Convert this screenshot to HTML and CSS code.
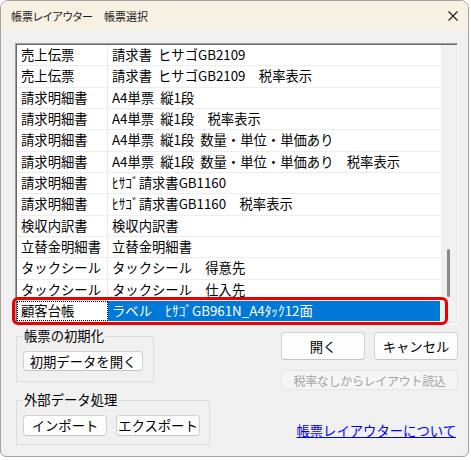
FILE: index.html
```html
<!DOCTYPE html>
<html lang="ja">
<head>
<meta charset="utf-8">
<title>帳票レイアウター 帳票選択</title>
<link rel="stylesheet" href="styles.css">
</head>
<body>
<div class="window">
  <div class="titlebar">
    <span class="title">帳票レイアウター　帳票選択</span>
    <svg class="close" width="10" height="10" viewBox="0 0 10 10"><path d="M0.5 0.5 L9.5 9.5 M9.5 0.5 L0.5 9.5" stroke="#1c1c1c" stroke-width="1.1" fill="none"/></svg>
  </div>

  <div class="list">
    <div class="rows">
      <div class="row"><span class="c1">売上伝票</span><span class="c2">請求書 ヒサゴGB2109</span></div>
      <div class="row"><span class="c1">売上伝票</span><span class="c2">請求書 ヒサゴGB2109　税率表示</span></div>
      <div class="row"><span class="c1">請求明細書</span><span class="c2">A4単票 縦1段</span></div>
      <div class="row"><span class="c1">請求明細書</span><span class="c2">A4単票 縦1段　税率表示</span></div>
      <div class="row"><span class="c1">請求明細書</span><span class="c2">A4単票 縦1段 数量・単位・単価あり</span></div>
      <div class="row"><span class="c1">請求明細書</span><span class="c2">A4単票 縦1段 数量・単位・単価あり　税率表示</span></div>
      <div class="row"><span class="c1">請求明細書</span><span class="c2">ﾋｻｺﾞ請求書GB1160</span></div>
      <div class="row"><span class="c1">請求明細書</span><span class="c2">ﾋｻｺﾞ請求書GB1160　税率表示</span></div>
      <div class="row"><span class="c1">検収内訳書</span><span class="c2">検収内訳書</span></div>
      <div class="row"><span class="c1">立替金明細書</span><span class="c2">立替金明細書</span></div>
      <div class="row"><span class="c1">タックシール</span><span class="c2">タックシール　得意先</span></div>
      <div class="row"><span class="c1">タックシール</span><span class="c2">タックシール　仕入先</span></div>
      <div class="row sel"><span class="c1">顧客台帳</span><span class="c2">ラベル　ﾋｻｺﾞGB961N_A4ﾀｯｸ12面</span></div>
    </div>
    <div class="scrollbar"><div class="thumb"></div></div>
    <div class="highlight"></div>
  </div>

  <div class="bottom">
    <div class="left">
      <fieldset class="group g1">
        <legend>帳票の初期化</legend>
        <button class="btn btn-init">初期データを開く</button>
      </fieldset>
      <fieldset class="group g2">
        <legend>外部データ処理</legend>
        <div class="btn-row">
          <button class="btn btn-io">インポート</button>
          <button class="btn btn-io">エクスポート</button>
        </div>
      </fieldset>
    </div>
    <div class="right">
      <div class="btn-row">
        <button class="btn btn-lg">開く</button>
        <button class="btn btn-lg">キャンセル</button>
      </div>
      <button class="btn btn-disabled" disabled>税率なしからレイアウト読込</button>
      <a class="link" href="#">帳票レイアウターについて</a>
    </div>
  </div>
</div>
</body>
</html>
```

FILE: styles.css
```css
* { box-sizing: border-box; }

html, body {
  margin: 0;
  padding: 0;
  background: #ffffff;
}

body {
  font-family: "Noto Sans CJK JP", "Noto Sans", sans-serif;
  font-size: 13.33px;
  color: #000;
}

.window {
  width: 469px;
  height: 457px;
  border: 1px solid #a3a3a3;
  border-radius: 8px 8px 6px 6px;
  background: #f0f0f0;
  overflow: hidden;
  display: flex;
  flex-direction: column;
}

.titlebar {
  flex: none;
  height: 29px;
  background: #f7f1e3;
  display: flex;
  align-items: center;
  justify-content: space-between;
  padding: 0 10px 0 10px;
  font-size: 11px;
  font-feature-settings: "palt";
  color: #1c1c1c;
}

.close { display: block; }

/* list box */
.list {
  position: relative;
  flex: none;
  display: flex;
  width: 443px;
  height: 281px;
  margin: 13px 10px 0 14px;
  padding: 1px;
  border: 1px solid;
  border-color: #a0a0a0 #ffffff #ffffff #a0a0a0;
  box-shadow: inset 1px 1px 0 #696969, inset -1px -1px 0 #e3e3e3;
  background: #ffffff;
}

.rows {
  flex: 1;
  overflow: hidden;
  display: flex;
  flex-direction: column;
  background: #ffffff;
}

.row {
  flex: none;
  height: 21.33px;
  display: grid;
  grid-template-columns: 91px 1fr;
  border-bottom: 1px solid #eeeeee;
  line-height: 20px;
  white-space: nowrap;
  word-spacing: 3px;
}

.c1, .c2 {
  overflow: hidden;
  padding-left: 4px;
}

.c1 { border-right: 1px solid #eaeaea; }

.row.sel .c1 {
  outline: 1px dotted #000;
  outline-offset: -1px;
}

.row.sel .c2 {
  background: #0078d7;
  color: #ffffff;
}

.scrollbar {
  flex: none;
  width: 16px;
  border-left: 1px solid #fbfbfb;
  background: #f0f0f0;
  padding: 204px 0 0 6px;
}

.thumb {
  width: 3px;
  height: 48px;
  background: #8a8a8a;
  border-radius: 2px;
}

.highlight {
  position: absolute;
  left: -4px;
  top: 253px;
  width: 436px;
  height: 28px;
  border: 3px solid #ea0000;
  border-radius: 6px;
}

/* bottom area */
.bottom {
  display: flex;
  justify-content: space-between;
  align-items: flex-start;
  padding: 0 10px 0 15px;
}

.left {
  margin-top: 4px;
  display: flex;
  flex-direction: column;
  align-items: flex-start;
  gap: 10px;
}

.group {
  margin: 0;
  min-width: 0;
  border: 1px solid #dcdcdc;
}

.group legend {
  padding: 0 1px;
  margin: 0;
  line-height: 16px;
  font-size: 13.33px;
}

.g1 {
  width: 138px;
  padding: 7px 9px 10px 6px;
}

.g2 {
  width: 194px;
  padding: 7px 9px 8px 6px;
}

.btn-row {
  display: flex;
  gap: 9px;
}

.btn {
  font: inherit;
  color: #000;
  background: #fdfdfd;
  border: 1px solid #d0d0d0;
  border-bottom-color: #c4c4c4;
  border-radius: 4px;
  padding: 0;
  margin: 0;
  display: flex;
  align-items: center;
  justify-content: center;
  white-space: nowrap;
}

.btn-init { width: 120px; height: 20px; }

.btn-io { width: 84px; height: 21px; }

.right {
  margin-top: 8px;
  width: 177px;
  display: flex;
  flex-direction: column;
  align-items: flex-end;
}

.btn-lg { width: 84px; height: 28px; }

.btn-disabled {
  width: 177px;
  height: 20px;
  margin-top: 10px;
  background: #f5f5f5;
  border-color: #e6e6e6;
  color: #a3a3a3;
  font-size: 12px;
  letter-spacing: -0.3px;
}

.link {
  margin-top: 33px;
  margin-right: 2px;
  color: #0000ff;
  text-decoration: underline;
  line-height: 16px;
}
```
